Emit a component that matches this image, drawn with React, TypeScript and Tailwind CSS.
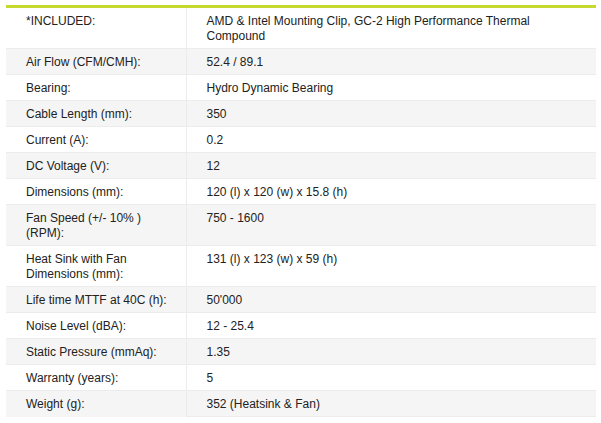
const specs: [string, string][] = [
  ["*INCLUDED:", "AMD & Intel Mounting Clip, GC-2 High Performance Thermal Compound"],
  ["Air Flow (CFM/CMH):", "52.4 / 89.1"],
  ["Bearing:", "Hydro Dynamic Bearing"],
  ["Cable Length (mm):", "350"],
  ["Current (A):", "0.2"],
  ["DC Voltage (V):", "12"],
  ["Dimensions (mm):", "120 (l) x 120 (w) x 15.8 (h)"],
  ["Fan Speed (+/- 10% ) (RPM):", "750 - 1600"],
  ["Heat Sink with Fan Dimensions (mm):", "131 (l) x 123 (w) x 59 (h)"],
  ["Life time MTTF at 40C (h):", "50'000"],
  ["Noise Level (dBA):", "12 - 25.4"],
  ["Static Pressure (mmAq):", "1.35"],
  ["Warranty (years):", "5"],
  ["Weight (g):", "352 (Heatsink & Fan)"],
];

export default function App() {
  return (
    <div className="w-[601px] h-[423px] bg-white pt-[5px] px-[6px] font-['Liberation_Sans',Arial,sans-serif] text-[12px] leading-[15px] text-[#222]">
      <table className="w-[590px] border-collapse border-t-[3px] border-[#c5d92e] table-fixed">
        <tbody>
          {specs.map(([label, value], i) => (
            <tr key={label} className={i % 2 === 1 ? "bg-[#f5f5f5]" : "bg-white"}>
              <td
                className={`w-[180px] pl-5 pr-3 pt-[6px] pb-[4px] align-top border-r border-[#ececec] ${
                  i === 0 ? "" : "border-t border-t-[#ececec]"
                }`}
              >
                {label}
              </td>
              <td
                className={`pl-5 pr-5 pt-[6px] pb-[4px] align-top ${
                  i === 0 ? "" : "border-t border-t-[#ececec]"
                } ${i === specs.length - 1 ? "border-b border-b-[#ececec]" : ""}`}
              >
                {value}
              </td>
            </tr>
          ))}
        </tbody>
      </table>
    </div>
  );
}
